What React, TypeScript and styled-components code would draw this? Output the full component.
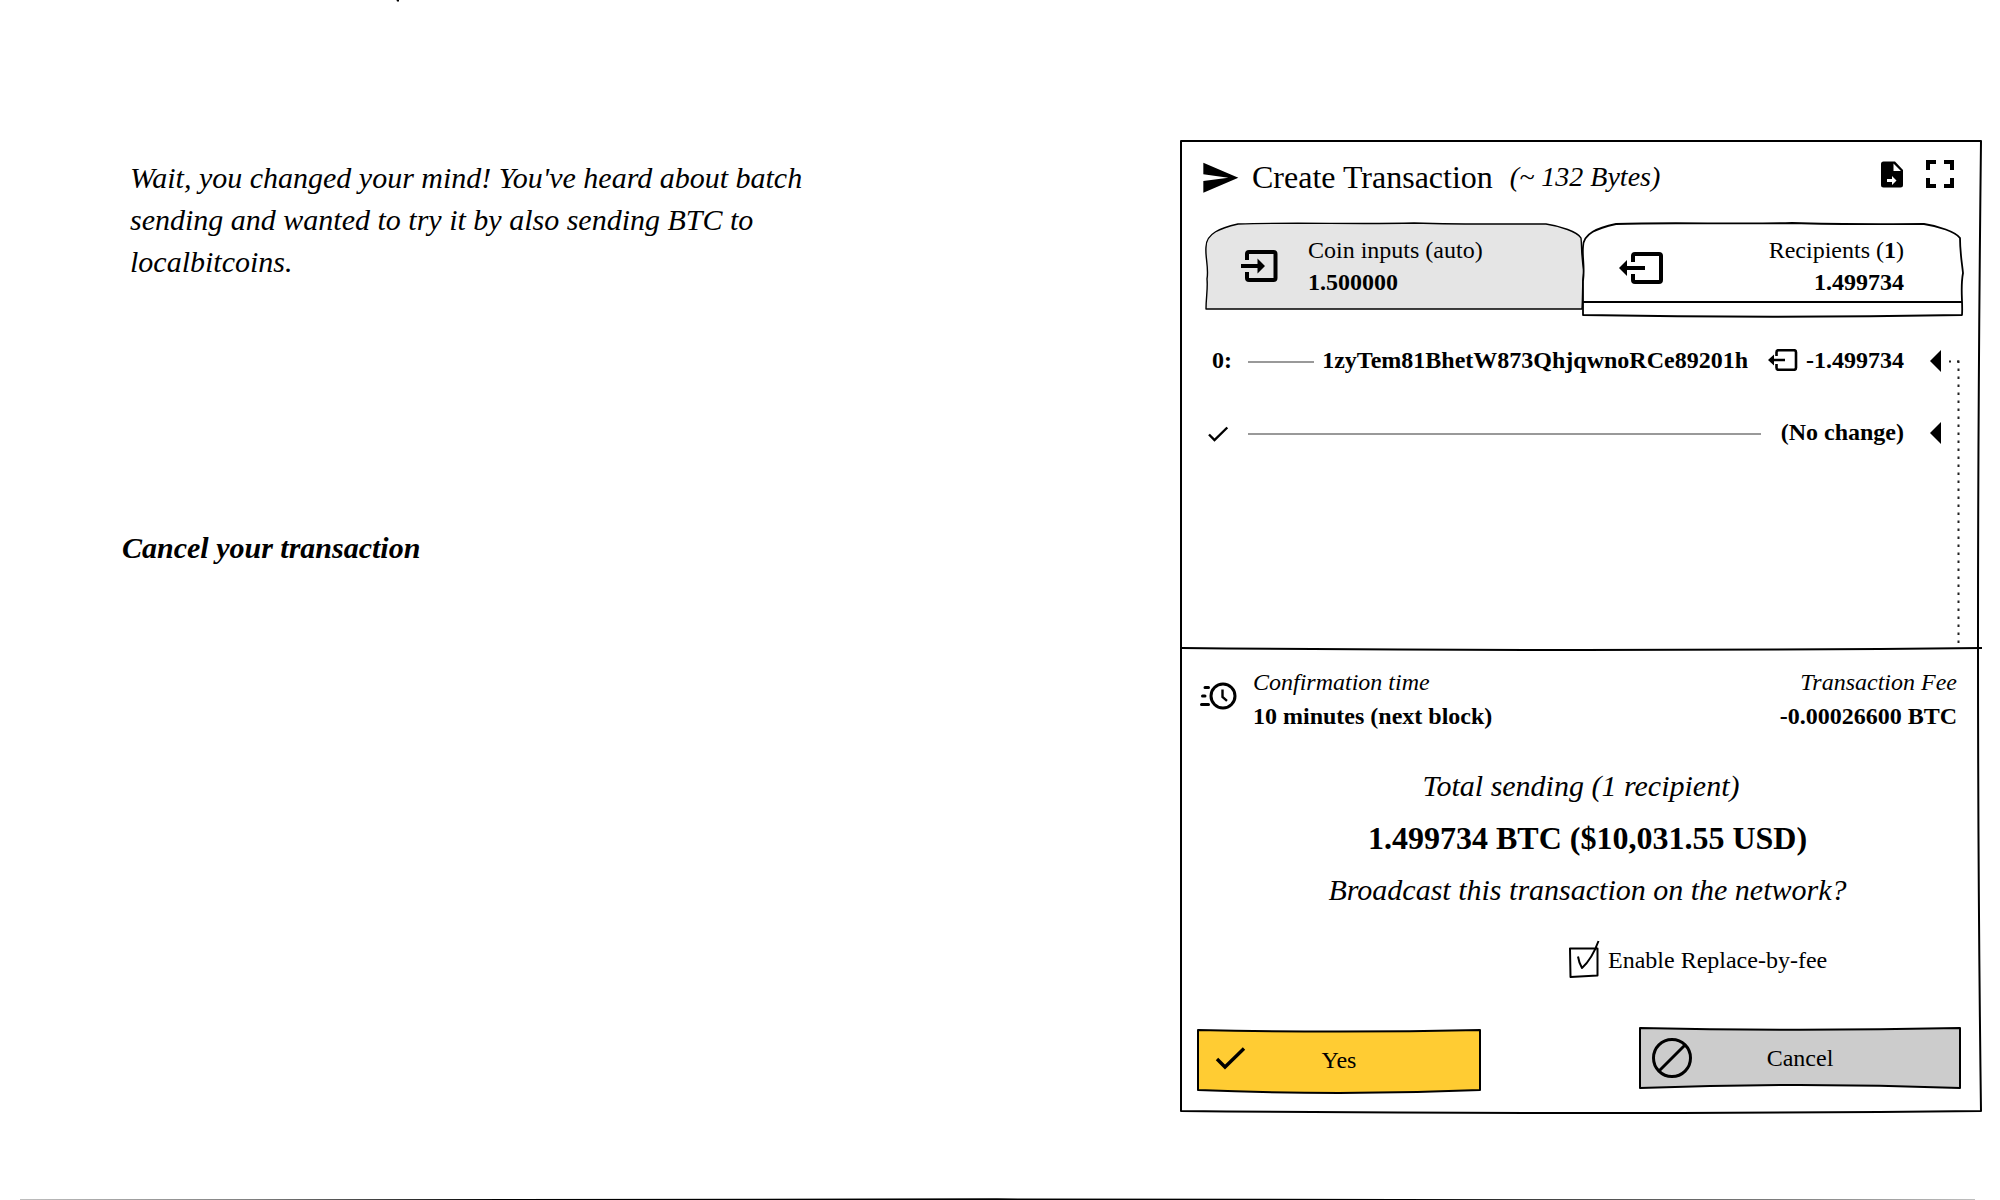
import React, { useState } from "react";
import styled, { createGlobalStyle } from "styled-components";

const GlobalStyle = createGlobalStyle`
  *, *::before, *::after { box-sizing: border-box; }
  body {
    margin: 0;
    background: #fff;
    color: #000;
    font-family: "Liberation Serif", "Times New Roman", serif;
  }
  svg { display: block; flex: none; }
  h1, p, ul, dl, dt, dd { margin: 0; padding: 0; }
`;

/* ---------- page ---------- */

const Page = styled.div`
  position: relative;
  min-height: 100vh;
  display: flex;
  flex-direction: column;
  overflow: hidden;
`;

const Columns = styled.main`
  display: flex;
  align-items: flex-start;
  padding: 140px 18px 0 122px;
`;

const Story = styled.section`
  flex: 1;
  padding-top: 17px;
  display: flex;
  flex-direction: column;
  gap: 244px;
  font-size: 30px;
  line-height: 42px;
  font-style: italic;
`;

const Narration = styled.p`
  max-width: 700px;
  padding-left: 8px;
`;

const Task = styled.p`
  font-weight: bold;
`;

const TopMark = styled.svg`
  position: absolute;
  top: 0;
  left: 396px;
`;

const PageEdge = styled.svg`
  width: 100%;
  height: 3px;
  margin-top: auto;
`;

/* ---------- hand-drawn outlines ---------- */

const Outline = styled.svg`
  position: absolute;
  inset: 0;
  width: 100%;
  height: 100%;
  overflow: visible;
  pointer-events: none;
`;

type SketchProps = { box: string; d: string; fill?: string; thickness?: number };

function Sketch({ box, d, fill = "none", thickness = 2 }: SketchProps) {
  return (
    <Outline viewBox={box} preserveAspectRatio="none" aria-hidden="true">
      <path d={d} fill={fill} stroke="#000" strokeWidth={thickness} strokeLinejoin="round" vectorEffect="non-scaling-stroke" />
    </Outline>
  );
}

/* ---------- panel ---------- */

const Panel = styled.section`
  position: relative;
  flex: 0 1 802px;
  padding: 17px 0 20px;
`;

const Header = styled.header`
  display: flex;
  align-items: center;
  padding: 0 28px 0 20px;
  line-height: 40px;
`;

const Title = styled.h1`
  margin-left: 12px;
  font-size: 32px;
  font-weight: normal;
`;

const Bytes = styled.span`
  margin-left: 17px;
  font-size: 28px;
  font-style: italic;
`;

const Actions = styled.div`
  align-self: flex-start;
  display: flex;
  align-items: center;
  gap: 23px;
  height: 34px;
  margin-left: auto;
`;

const IconButton = styled.button`
  padding: 0;
  border: 0;
  background: none;
  color: inherit;
  cursor: pointer;
`;

const Tabs = styled.div`
  display: flex;
  align-items: flex-start;
  margin: 26px 20px 0 24px;
`;

const Tab = styled.button<{ $selected?: boolean }>`
  position: relative;
  flex: 1;
  display: flex;
  align-items: center;
  justify-content: ${(p) => (p.$selected ? "space-between" : "flex-start")};
  gap: 30px;
  margin-left: ${(p) => (p.$selected ? "-2px" : "0")};
  padding: ${(p) => (p.$selected ? "11px 58px 18px 37px" : "11px 58px 12px 37px")};
  border: 0;
  background: none;
  color: inherit;
  font: 24px/32px "Liberation Serif", "Times New Roman", serif;
  text-align: ${(p) => (p.$selected ? "right" : "left")};
  cursor: pointer;
`;

const TabIcon = styled.span`
  position: relative;
`;

const TabText = styled.span`
  position: relative;
  display: flex;
  flex-direction: column;
`;

const Outputs = styled.div`
  position: relative;
  min-height: 333px;
  padding-top: 28px;
`;

const OutputList = styled.ul`
  list-style: none;
  display: flex;
  flex-direction: column;
  gap: 40px;
`;

const OutputRow = styled.li`
  display: flex;
  align-items: center;
  gap: 8px;
  padding: 0 41px 0 24px;
  font-size: 24px;
  line-height: 32px;
  font-weight: bold;
`;

const Index = styled.span`
  flex: none;
  width: 36px;
  text-align: center;
`;

const Rule = styled.span`
  flex: 1;
  height: 2px;
  margin-top: 4px;
  background: #999;
`;

const Value = styled.span`
  display: inline-flex;
  align-items: center;
  gap: 8px;
  padding: 0 18px 0 12px;
`;

const Connector = styled.svg`
  position: absolute;
  top: 43px;
  right: 21px;
  width: 17px;
  height: calc(100% - 46px);
`;

const Divider = styled.div`
  position: absolute;
  left: 2px;
  right: 0;
  bottom: 0;
  height: 2px;
`;

const Details = styled.dl`
  display: flex;
  align-items: center;
  padding: 16px 25px 0 20px;
  font-size: 24px;
  line-height: 34px;
`;

const Detail = styled.div<{ $end?: boolean }>`
  margin-left: ${(p) => (p.$end ? "auto" : "16px")};
  text-align: ${(p) => (p.$end ? "right" : "left")};

  dt { font-style: italic; }
  dd { font-weight: bold; }
`;

const Summary = styled.div`
  margin-top: 27px;
  text-align: center;
  font-size: 30px;
  line-height: 52px;
  font-style: italic;
`;

const Confirm = styled.div`
  padding-left: 13px;
`;

const Amount = styled.p`
  font-size: 32px;
  font-style: normal;
  font-weight: bold;
`;

const Option = styled.label`
  display: flex;
  align-items: center;
  gap: 10px;
  margin-top: 28px;
  padding-left: calc(50% - 12px);
  font-size: 24px;
  line-height: 32px;
  cursor: pointer;
`;

const CheckWrap = styled.span`
  position: relative;
  width: 29px;
  height: 30px;
`;

const CheckInput = styled.input`
  appearance: none;
  display: block;
  width: 100%;
  height: 100%;
  margin: 0;
  cursor: pointer;
`;

const Buttons = styled.div`
  display: flex;
  align-items: flex-start;
  justify-content: space-between;
  margin-top: 52px;
  padding: 0 21px 0 17px;
`;

const ActionButton = styled.button<{ $primary?: boolean }>`
  position: relative;
  flex: 0 1 ${(p) => (p.$primary ? "284px" : "322px")};
  display: grid;
  grid-template-columns: 1fr auto 1fr;
  align-items: center;
  height: ${(p) => (p.$primary ? "64px" : "60px")};
  padding: 0;
  border: 0;
  background: none;
  color: inherit;
  font: 24px/32px "Liberation Serif", "Times New Roman", serif;
  cursor: pointer;
`;

const ButtonIcon = styled.span`
  position: relative;
  padding-left: 13px;
`;

const ButtonText = styled.span`
  position: relative;
`;

/* ---------- icons ---------- */

const SendIcon = () => (
  <svg width="40" height="40" viewBox="0 0 24 24" aria-hidden="true">
    <path d="M2 21.400 23 12.400 2 3.400v7l15 2-15 2z" />
  </svg>
);

const FileIcon = () => (
  <svg width="22" height="27" viewBox="0 0 22 27" aria-hidden="true">
    <path d="M2.500 .5H14L22 9v15a2.500 2.500 0 0 1-2.500 2.500H2.500A2.500 2.500 0 0 1 0 24V3A2.500 2.500 0 0 1 2.500 .5z" />
    <path d="M12.500 2.500v7.500H20zM6 18h5v-3l4.500 4.500L11 24v-3H6z" fill="#fff" />
  </svg>
);

const FullscreenIcon = () => (
  <svg width="28" height="28" viewBox="5 5 14 14" aria-hidden="true">
    <path d="M7 14H5v5h5v-2H7zM5 10h2V7h3V5H5zM17 17h-3v2h5v-5h-2zM14 5v2h3v3h2V5z" />
  </svg>
);

const InputIcon = () => (
  <svg width="37" height="32" viewBox="0 0 37 32" aria-hidden="true">
    <path d="M6 10V4a2 2 0 0 1 2-2H32.500a2 2 0 0 1 2 2V28a2 2 0 0 1-2 2H8a2 2 0 0 1-2-2V22" fill="none" stroke="#000" strokeWidth="4" />
    <path d="M0 14h16.500V8.500L24 16l-7.500 7.500V18H0z" />
  </svg>
);

const OutputIcon = () => (
  <svg width="44" height="36" viewBox="0 0 44 36" aria-hidden="true">
    <path d="M14 14V8a2 2 0 0 1 2-2H40a2 2 0 0 1 2 2V32a2 2 0 0 1-2 2H16a2 2 0 0 1-2-2V26" fill="none" stroke="#000" strokeWidth="4" />
    <path d="M26 18H8v-6L0 20l8 8v-6H26z" />
  </svg>
);

const SmallOutputIcon = () => (
  <svg width="30" height="22" viewBox="0 0 30 22" aria-hidden="true">
    <path d="M8.500 7V3.200a2 2 0 0 1 2-2H26a2 2 0 0 1 2 2V18.800a2 2 0 0 1-2 2H10.500a2 2 0 0 1-2-2V15" fill="none" stroke="#000" strokeWidth="2.600" />
    <path d="M17 9.800H6V5.500L0 11l6 5.500V12.200H17z" />
  </svg>
);

const SmallCheckIcon = () => (
  <svg width="36" height="20" viewBox="0 0 36 20" aria-hidden="true">
    <path d="M5 12.500l5.500 5.500L23.300 5.500" fill="none" stroke="#000" strokeWidth="2.400" />
  </svg>
);

const ArrowIcon = () => (
  <svg width="11" height="24" viewBox="0 0 11 24" aria-hidden="true">
    <path d="M11 2v22L0 13z" />
  </svg>
);

const FastClockIcon = () => (
  <svg width="37" height="34" viewBox="0 0 37 34" aria-hidden="true">
    <circle cx="23" cy="14" r="12" fill="none" stroke="#000" strokeWidth="3" />
    <path d="M22.500 7.500V15l4.500 3.800" fill="none" stroke="#000" strokeWidth="2.400" />
    <path d="M5 5.500h3.500M2.500 14H5M1.500 22.500h7" fill="none" stroke="#000" strokeWidth="3" strokeLinecap="round" />
  </svg>
);

const CheckIcon = () => (
  <svg width="40" height="26" viewBox="0 0 40 26" aria-hidden="true">
    <path d="M7 12l8 8L34 1.500" fill="none" stroke="#000" strokeWidth="3.400" />
  </svg>
);

const BlockIcon = () => (
  <svg width="40" height="40" viewBox="0 0 40 40" aria-hidden="true">
    <path d="M20 1.500a18.500 18.500 0 1 0 0 37a18.500 18.500 0 1 0 0-37zM33 7 7 33" fill="none" stroke="#000" strokeWidth="3" />
  </svg>
);

/* ---------- screen ---------- */

const tabShape =
  "M2 86 C2 74 4 66 3 56 C5 45 1 34 2 24 C2 10 17 5 34 1 C90 -1 150 1.500 210 0 C260 1.500 290 1 342 1 C356 3 374 9 377 15 C378 24 377 34 380 48 C378 60 379 70 378 86 Z";

const activeTabShape =
  "M1 92 V58 C3 45 0 34 1 24 C1 10 16 5 34 1 C90 -1 150 1.500 210 0 C260 1.500 290 1 342 1 C356 3 374 9 378 15 C378 30 380 40 381 50 C378 66 381 78 380 92 Q190 95.500 1 92 Z M1 79H380";

export default function App() {
  const [replaceByFee, setReplaceByFee] = useState(true);

  return (
    <Page>
      <GlobalStyle />
      <TopMark width="3" height="2" viewBox="0 0 3 2" aria-hidden="true">
        <path d="M.5 0H3V1.500H1z" />
      </TopMark>

      <Columns>
        <Story>
          <Narration>
            Wait, you changed your mind! You've heard about batch sending and wanted to try it by also sending BTC to
            localbitcoins.
          </Narration>
          <Task>Cancel your transaction</Task>
        </Story>

        <Panel>
          <Sketch box="0 0 802 972" d="M1 1H801Q795 520 801 971Q400 975 1 971Q-1 520 1 1Z" />

          <Header>
            <SendIcon />
            <Title>Create Transaction</Title>
            <Bytes>(~ 132 Bytes)</Bytes>
            <Actions>
              <IconButton type="button" aria-label="Export to file">
                <FileIcon />
              </IconButton>
              <IconButton type="button" aria-label="Fullscreen">
                <FullscreenIcon />
              </IconButton>
            </Actions>
          </Header>

          <Tabs role="tablist">
            <Tab type="button" role="tab" aria-selected={false}>
              <Sketch box="0 0 380 87" d={tabShape} fill="#e5e5e5" thickness={1.4} />
              <TabIcon>
                <InputIcon />
              </TabIcon>
              <TabText>
                <span>Coin inputs (auto)</span>
                <b>1.500000</b>
              </TabText>
            </Tab>
            <Tab type="button" role="tab" aria-selected $selected>
              <Sketch box="0 0 380 93" d={activeTabShape} fill="#fff" thickness={1.8} />
              <TabIcon>
                <OutputIcon />
              </TabIcon>
              <TabText>
                <span>
                  Recipients (<b>1</b>)
                </span>
                <b>1.499734</b>
              </TabText>
            </Tab>
          </Tabs>

          <Outputs>
            <OutputList>
              <OutputRow>
                <Index>0:</Index>
                <Rule />
                <span>1zyTem81BhetW873QhjqwnoRCe89201h</span>
                <Value>
                  <SmallOutputIcon />
                  -1.499734
                </Value>
                <ArrowIcon />
              </OutputRow>
              <OutputRow>
                <Index>
                  <SmallCheckIcon />
                </Index>
                <Rule />
                <Value>(No change)</Value>
                <ArrowIcon />
              </OutputRow>
            </OutputList>
            <Connector aria-hidden="true">
              <path d="M5 2.500h11" fill="none" stroke="#222" strokeWidth="2" strokeDasharray="2 6" />
              <line x1="14.5" y1="1.500" x2="14.5" y2="100%" stroke="#222" strokeWidth="2" strokeDasharray="2.500 5.500" />
            </Connector>
            <Divider>
              <Sketch box="0 0 800 2" d="M0 1Q400 5 800 1" />
            </Divider>
          </Outputs>

          <Details>
            <FastClockIcon />
            <Detail>
              <dt>Confirmation time</dt>
              <dd>10 minutes (next block)</dd>
            </Detail>
            <Detail $end>
              <dt>Transaction Fee</dt>
              <dd>-0.00026600 BTC</dd>
            </Detail>
          </Details>

          <Summary>
            <p>Total sending (1 recipient)</p>
            <Confirm>
              <Amount>1.499734 BTC ($10,031.55 USD)</Amount>
              <p>Broadcast this transaction on the network?</p>
            </Confirm>
          </Summary>

          <Option>
            <CheckWrap>
              <CheckInput
                type="checkbox"
                checked={replaceByFee}
                onChange={(e) => setReplaceByFee(e.target.checked)}
              />
              <Sketch
                box="0 0 29 30"
                d={"M1 3.500H28.500V30.500L1.500 32Z" + (replaceByFee ? "M9 11.500Q10 18 13 23Q23 14 29.500 -4" : "")}
              />
            </CheckWrap>
            Enable Replace-by-fee
          </Option>

          <Buttons>
            <ActionButton type="button" $primary>
              <Sketch box="0 0 284 64" d="M1 2Q142 5 283 2V62Q142 68 1 62Z" fill="#ffcc33" />
              <ButtonIcon>
                <CheckIcon />
              </ButtonIcon>
              <ButtonText>Yes</ButtonText>
            </ActionButton>
            <ActionButton type="button">
              <Sketch box="0 0 322 60" d="M1 0Q160 3.500 321 0V60Q160 54 1 60Z" fill="#ccc" />
              <ButtonIcon>
                <BlockIcon />
              </ButtonIcon>
              <ButtonText>Cancel</ButtonText>
            </ActionButton>
          </Buttons>
        </Panel>
      </Columns>

      <PageEdge viewBox="0 0 2000 3" preserveAspectRatio="none" aria-hidden="true">
        <path d="M20 3.800 997 2.350 1975 3.800" fill="none" stroke="#000" strokeWidth="2" />
      </PageEdge>
    </Page>
  );
}
